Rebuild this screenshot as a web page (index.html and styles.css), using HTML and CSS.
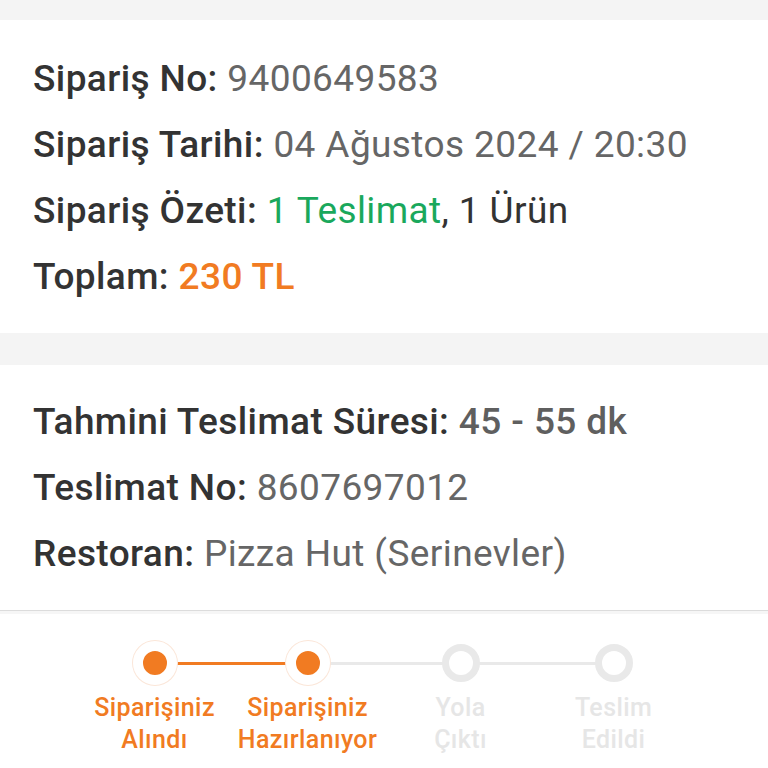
FILE: index.html
```html
<!DOCTYPE html>
<html lang="tr">
<head>
  <meta charset="UTF-8">
  <title>Sipariş Detayı</title>
  <link rel="stylesheet" href="styles.css">
</head>
<body>
  <div class="gap top-gap"></div>

  <section class="card summary">
    <p class="row"><span class="label">Sipariş No:</span> <span class="value">9400649583</span></p>
    <p class="row"><span class="label">Sipariş Tarihi:</span> <span class="value">04 Ağustos 2024 / 20:30</span></p>
    <p class="row"><span class="label">Sipariş Özeti:</span> <span class="green">1 Teslimat</span><span class="dark">, 1 Ürün</span></p>
    <p class="row"><span class="label">Toplam:</span> <span class="orange">230 TL</span></p>
  </section>

  <div class="gap mid-gap"></div>

  <section class="card delivery">
    <p class="row"><span class="label">Tahmini Teslimat Süresi:</span> <span class="value strong">45 - 55 dk</span></p>
    <p class="row"><span class="label">Teslimat No:</span> <span class="value">8607697012</span></p>
    <p class="row"><span class="label">Restoran:</span> <span class="value">Pizza Hut (Serinevler)</span></p>
  </section>

  <div class="stepper">
    <div class="step done">
      <span class="dot"></span>
      <span class="step-name">Siparişiniz<br>Alındı</span>
    </div>
    <div class="step current">
      <span class="dot"></span>
      <span class="step-name">Siparişiniz<br>Hazırlanıyor</span>
    </div>
    <div class="step">
      <span class="dot"></span>
      <span class="step-name">Yola<br>Çıktı</span>
    </div>
    <div class="step">
      <span class="dot"></span>
      <span class="step-name">Teslim<br>Edildi</span>
    </div>
  </div>
</body>
</html>
```

FILE: styles.css
```css
body {
  margin: 0;
  background: #fff;
  font-family: Roboto, "Noto Sans", sans-serif;
  color: #333;
}

.gap {
  background: #f4f4f4;
}

.top-gap {
  height: 20px;
}

.mid-gap {
  height: 32px;
}

.card {
  background: #fff;
  padding: 26px 33px 23px;
}

.delivery {
  padding: 24px 33px 23px;
  border-bottom: 1px solid #dcdcdc;
  box-shadow: 0 3px 0 #f6f6f6;
}

.row {
  margin: 0;
  font-size: 37px;
  letter-spacing: 0.4px;
  line-height: 66px;
  white-space: nowrap;
}

.label {
  font-weight: 500;
  color: #333;
}

.value {
  color: #666;
}

.value.strong {
  font-weight: 500;
  color: #5f5f5f;
}

.dark {
  color: #333;
}

.green {
  color: #1aa85c;
}

.orange {
  color: #f17b22;
  font-weight: 500;
}

.stepper {
  display: flex;
  justify-content: center;
  padding-top: 31px;
}

.step {
  position: relative;
  width: 153px;
  display: flex;
  flex-direction: column;
  align-items: center;
}

.step:not(:last-child)::after {
  content: "";
  position: absolute;
  top: 20px;
  left: 76px;
  width: 153px;
  height: 3px;
  background: #e9e9e9;
}

.step.done::after {
  background: #f17b22;
}

.dot {
  position: relative;
  z-index: 1;
  box-sizing: border-box;
  width: 38px;
  height: 38px;
  margin: 2px 0;
  border-radius: 50%;
  border: 7px solid #e9e9e9;
  background: #fff;
}

.done .dot,
.current .dot {
  width: 44px;
  height: 44px;
  margin: -1px 0;
  border: 10px solid #fff;
  background: #f17b22;
  box-shadow: 0 0 0 1px #fbe6d8;
}

.step-name {
  margin-top: 8px;
  font-size: 25px;
  letter-spacing: 0.4px;
  font-weight: 500;
  line-height: 32px;
  text-align: center;
  color: #e6e6e6;
  white-space: nowrap;
}

.done .step-name,
.current .step-name {
  color: #f17b22;
}
```
